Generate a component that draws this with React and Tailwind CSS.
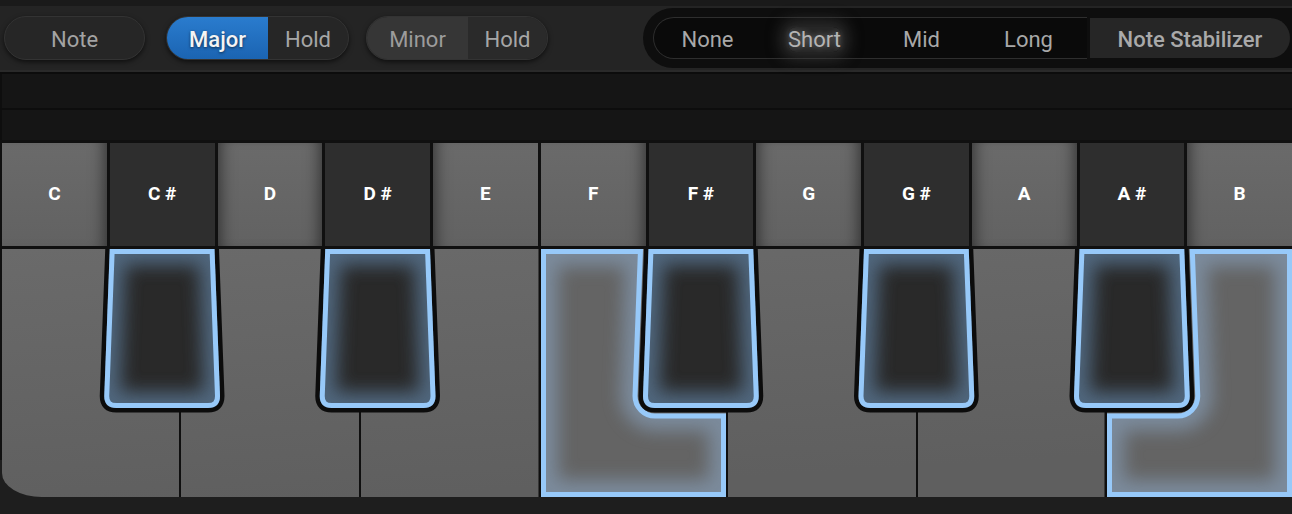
import React from "react";

const CW = 104.75;
const cellL = (i) => 2 + i * (CW + 3);
const cellR = (i) => cellL(i) + CW;

const bk = (l, r) =>
  `M${l},249 L${r},249 L${r + 5.5},396 Q${r + 5.5},408 ${r - 6.5},408 L${l + 6.5},408 Q${l - 5.5},408 ${l - 5.5},396 Z`;

const blackIdx = [1, 3, 6, 8, 10];

const F_PATH = `M541,249 L${cellL(6) - 5.5},249 L${cellL(6) - 11},396 A17.5,17.5 0 0 0 ${cellL(6) + 6.5},413.5 L726,413.5 L726,497 L541,497 Z`;
const bR = cellR(10);
const B_PATH = `M${bR + 5.5},249 L${bR + 11},396 A17.5,17.5 0 0 1 ${bR - 6.5},413.5 L1107,413.5 L1107,497 L1292,497 L1292,249 Z`;

const shR = "shadow-[inset_-14px_0_16px_-12px_rgba(0,0,0,0.55)]";
const shL = "shadow-[inset_14px_0_16px_-12px_rgba(0,0,0,0.55)]";
const shB = "shadow-[inset_14px_0_16px_-12px_rgba(0,0,0,0.55),inset_-14px_0_16px_-12px_rgba(0,0,0,0.55)]";

const cells = [
  { n: "C", b: false, s: shR },
  { n: "C #", b: true },
  { n: "D", b: false, s: shB },
  { n: "D #", b: true },
  { n: "E", b: false, s: shL },
  { n: "F", b: false, s: shR },
  { n: "F #", b: true },
  { n: "G", b: false, s: shB },
  { n: "G #", b: true },
  { n: "A", b: false, s: shB },
  { n: "A #", b: true },
  { n: "B", b: false, s: shL },
];

function Keys() {
  return (
    <svg width="1292" height="248" viewBox="0 249 1292 248" className="block">
      <defs>
        <linearGradient id="wk" x1="0" y1="0" x2="0.3" y2="1">
          <stop offset="0" stopColor="#6a6a6a" />
          <stop offset="1" stopColor="#5f5f5f" />
        </linearGradient>
        <filter id="bl" x="-50%" y="-50%" width="200%" height="200%">
          <feGaussianBlur stdDeviation="9" />
        </filter>
        {blackIdx.map((i) => (
          <clipPath id={`c${i}`} key={i}>
            <path d={bk(cellL(i), cellR(i))} />
          </clipPath>
        ))}
        <clipPath id="cf">
          <path d={F_PATH} />
        </clipPath>
        <clipPath id="cb">
          <path d={B_PATH} />
        </clipPath>
      </defs>
      <rect x="0" y="249" width="1292" height="248" fill="#101010" />
      <rect x="0" y="460" width="50" height="37" fill="#1e1e1e" />
      <path d="M2,249 H1292 V497 H42 A40,24 0 0 1 2,473 Z" fill="url(#wk)" />
      <rect x="538.5" y="249" width="3" height="248" fill="#0f0f0f" />
      <rect x="179" y="405" width="2" height="92" fill="#0f0f0f" />
      <rect x="359" y="405" width="2" height="92" fill="#0f0f0f" />
      <rect x="726" y="405" width="2" height="92" fill="#0f0f0f" />
      <rect x="916" y="405" width="2" height="92" fill="#0f0f0f" />
      <rect x="1104.5" y="405" width="2.5" height="92" fill="#0f0f0f" />

      {[
        ["cf", F_PATH],
        ["cb", B_PATH],
      ].map(([id, d]) => (
        <g key={id} clipPath={`url(#${id})`}>
          <path d={d} fill="#646464" />
          <path d={d} fill="none" stroke="#8fabca" strokeWidth="34" opacity="0.55" filter="url(#bl)" />
          <path d={d} fill="none" stroke="#97c9f9" strokeWidth="10" />
        </g>
      ))}

      {blackIdx.map((i) => {
        const d = bk(cellL(i), cellR(i));
        return (
          <g key={i}>
            <path d={d} fill="#292929" stroke="#0c0c0c" strokeWidth="9" />
            <g clipPath={`url(#c${i})`}>
              <path d={d} fill="none" stroke="#5d7b9a" strokeWidth="32" opacity="0.75" filter="url(#bl)" />
              <path d={d} fill="none" stroke="#97c9f9" strokeWidth="10" />
            </g>
          </g>
        );
      })}
    </svg>
  );
}

export default function App() {
  return (
    <div className="w-[1292px] h-[514px] overflow-hidden bg-[#1e1e1e] font-['Roboto','Noto_Sans',sans-serif]">
      {/* top bar */}
      <div className="h-[72px] border-t-[6px] border-b-2 border-t-[#1a1a1a] border-b-[#2a2a2a] bg-[#242424] flex items-center pl-[4px]">
        <div className="w-[141px] h-[44px] pt-[2px] rounded-full bg-[#262626] border border-[#333333] shadow-[0_2px_5px_rgba(0,0,0,0.6)] flex items-center justify-center text-[22px] text-[#a3a3a3]">
          Note
        </div>
        <div className="ml-[21px] w-[183px] h-[44px] rounded-full border border-[#333333] bg-[#262626] overflow-hidden flex shadow-[0_2px_5px_rgba(0,0,0,0.6)] text-[22px]">
          <div className="w-[101px] h-full pt-[2px] bg-linear-to-b from-[#2a7cce] to-[#1b64b2] flex items-center justify-center text-[#f4f4f4] font-medium [text-shadow:0_1px_3px_rgba(0,0,0,0.6)]">
            Major
          </div>
          <div className="flex-1 pt-[2px] flex items-center justify-center text-[#a6a6a6]">Hold</div>
        </div>
        <div className="ml-[17px] w-[182px] h-[44px] rounded-full border border-[#333333] overflow-hidden flex shadow-[0_2px_5px_rgba(0,0,0,0.6)] text-[22px]">
          <div className="w-[101px] h-full pt-[2px] bg-[#363636] flex items-center justify-center text-[#9c9c9c]">Minor</div>
          <div className="flex-1 pt-[2px] bg-[#2a2a2a] flex items-center justify-center text-[#a6a6a6]">Hold</div>
        </div>
        <div className="ml-auto w-[649px] h-[60px] rounded-l-full bg-[#0e0e0e] flex items-center pl-[10px] text-[22px]">
          <div className="w-[434px] h-[42px] pt-[2px] rounded-l-full border border-r-0 border-[#2e2e2e] bg-[#0a0a0a] flex items-center text-[#a8a8a8]">
            <div className="w-[107px] text-center">None</div>
            <div className="w-[107px] text-center">
              <span className="text-[#b4b4b4] rounded-lg shadow-[0_0_14px_8px_rgba(60,60,60,0.6)] bg-[#262626] [text-shadow:0_0_6px_rgba(255,255,255,0.4)]">
                Short
              </span>
            </div>
            <div className="w-[107px] text-center">Mid</div>
            <div className="w-[107px] text-center">Long</div>
          </div>
          <div className="ml-[3px] w-[200px] h-[40px] pt-[2px] rounded-l-[4px] rounded-r-full bg-[#262626] flex items-center justify-center font-medium text-[#a9a9a9]">
            Note Stabilizer
          </div>
        </div>
      </div>

      {/* strip */}
      <div className="h-[2px] bg-[#0c0c0c]" />
      <div className="h-[34px] bg-[#151515] border-l-2 border-[#0e0e0e]" />
      <div className="h-[2px] bg-[#0d0d0d]" />
      <div className="h-[30px] bg-[#151515] border-l-2 border-[#0e0e0e]" />

      {/* keyboard */}
      <div className="bg-[#101010] pt-[3px]">
        <div className="h-[103px] pl-[2px] grid grid-cols-12 gap-x-[3px]">
          {cells.map((c) => (
            <div
              key={c.n}
              className={
                c.b
                  ? "bg-[#2e2e2e] flex items-center justify-center text-[19px] font-bold text-white"
                  : `bg-linear-to-b from-[#6a6a6a] to-[#626262] flex items-center justify-center text-[19px] font-bold text-white ${c.s}`
              }
            >
              {c.n}
            </div>
          ))}
        </div>
        <div className="h-[3px]" />
        <Keys />
      </div>
      <div className="h-[17px] bg-[#1e1e1e]" />
    </div>
  );
}
